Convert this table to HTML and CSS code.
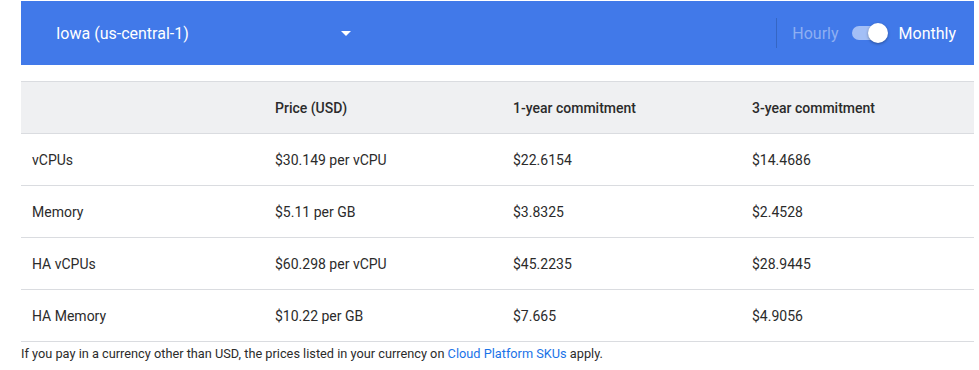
FILE: index.html
```html
<!DOCTYPE html>
<html lang="en">
<head>
<meta charset="utf-8">
<title>Pricing</title>
<link rel="stylesheet" href="styles.css">
</head>
<body>
<div class="page">
  <div class="bar">
    <div class="region">
      <span class="region-name">Iowa (us-central-1)</span>
      <svg class="caret" width="10" height="5" viewBox="0 0 10 5"><path d="M0 0h10L5 5z" fill="#fff"/></svg>
    </div>
    <div class="period">
      <span class="divider"></span>
      <span class="opt off">Hourly</span>
      <span class="switch"><span class="knob"></span></span>
      <span class="opt on">Monthly</span>
    </div>
  </div>
  <table class="prices">
    <thead>
      <tr><th class="c1"></th><th class="c2">Price (USD)</th><th class="c3">1-year commitment</th><th class="c4">3-year commitment</th></tr>
    </thead>
    <tbody>
      <tr><td>vCPUs</td><td>$30.149 per vCPU</td><td>$22.6154</td><td>$14.4686</td></tr>
      <tr><td>Memory</td><td>$5.11 per GB</td><td>$3.8325</td><td>$2.4528</td></tr>
      <tr><td>HA vCPUs</td><td>$60.298 per vCPU</td><td>$45.2235</td><td>$28.9445</td></tr>
      <tr><td>HA Memory</td><td>$10.22 per GB</td><td>$7.665</td><td>$4.9056</td></tr>
    </tbody>
  </table>
  <p class="note">If you pay in a currency other than USD, the prices listed in your currency on <a href="#">Cloud Platform SKUs</a> apply.</p>
</div>
</body>
</html>
```

FILE: styles.css
```css
html, body {
  margin: 0;
  padding: 0;
  background: #fff;
}
body {
  font-family: Roboto, "Liberation Sans", Arial, sans-serif;
  color: #2b2b2b;
}
.page {
  padding: 1px 0 0 21px;
  width: 953px;
}
.bar {
  height: 64px;
  background: #4179e9;
  display: flex;
  align-items: center;
  justify-content: space-between;
}
.region {
  display: flex;
  align-items: center;
  width: 295px;
  padding-left: 35px;
  justify-content: space-between;
}
.region-name {
  color: #fff;
  font-size: 16px;
}
.caret {
  display: block;
  margin-top: 1px;
}
.period {
  display: flex;
  align-items: center;
  height: 30px;
  padding-right: 18px;
}
.divider {
  width: 1px;
  height: 30px;
  background: #3566c4;
  margin-right: 15px;
}
.opt {
  font-size: 16px;
}
.opt.off {
  color: #8eaff2;
}
.opt.on {
  color: #fff;
}
.switch {
  position: relative;
  width: 34px;
  height: 14px;
  margin: 0 13px 0 13px;
  border-radius: 7px;
  background: #a3bff6;
}
.knob {
  position: absolute;
  right: -2px;
  top: -3px;
  width: 20px;
  height: 20px;
  border-radius: 50%;
  background: #fff;
  box-shadow: 0 1px 3px rgba(0, 0, 0, 0.35);
}
.prices {
  width: 953px;
  margin-top: 16px;
  border-collapse: collapse;
  font-size: 14px;
  table-layout: fixed;
}
.prices th, .prices td {
  text-align: left;
  padding: 0 11px;
  height: 51px;
  border-bottom: 1px solid #dadce0;
}
.prices thead tr {
  background: #eff0f2;
  border-top: 1px solid #dadce0;
}
.prices th {
  font-weight: 500;
  color: #2b2b2b;
}
.c1 { width: 221px; }
.c2 { width: 216px; }
.c3 { width: 217px; }
.prices td {
  color: #2b2b2b;
}
.note {
  margin: 4px 0 0;
  font-size: 12.75px;
  color: #2b2b2b;
}
.note a {
  color: #1a73e8;
  text-decoration: none;
}
```
